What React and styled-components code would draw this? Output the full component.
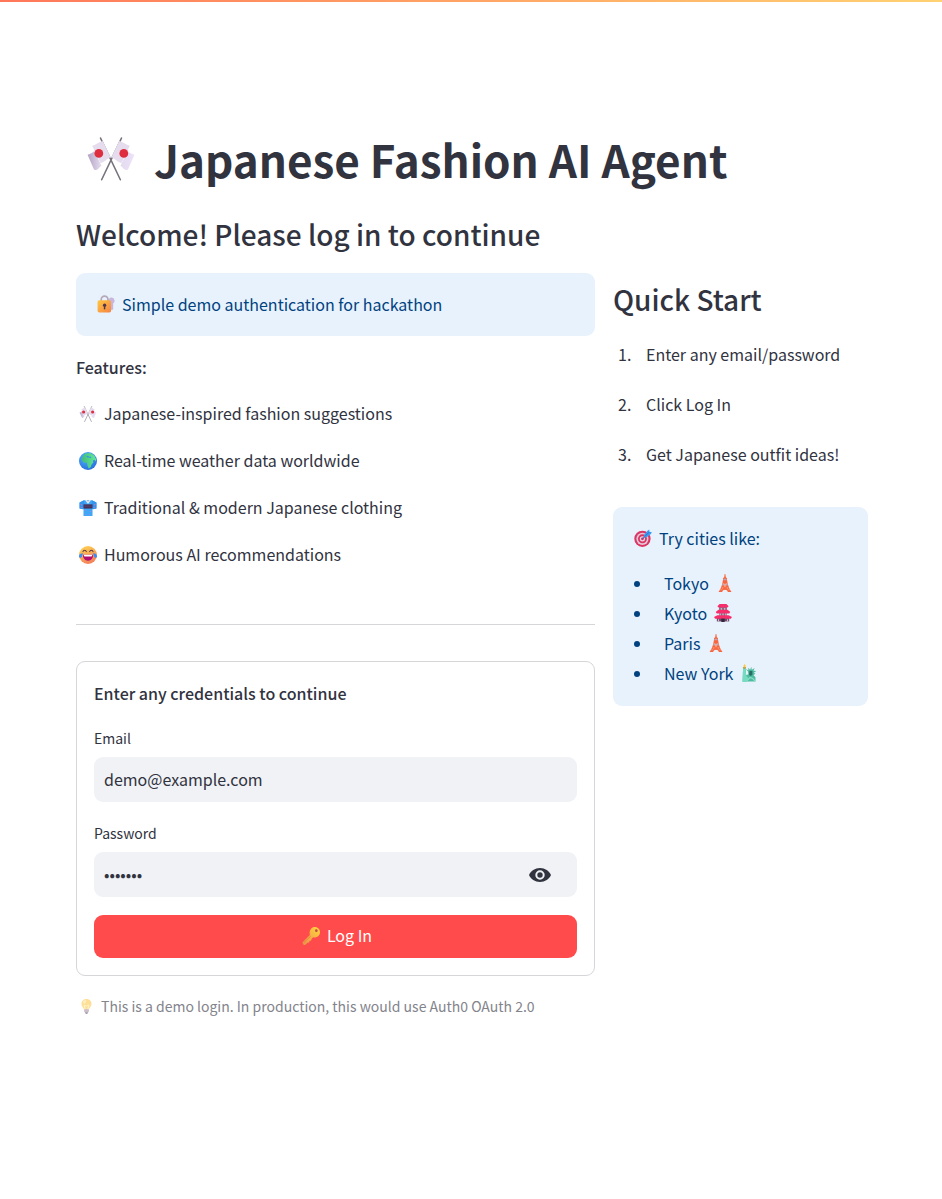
import React, { useState } from "react";
import styled, { createGlobalStyle } from "styled-components";

const GlobalStyle = createGlobalStyle`
  *, *::before, *::after { box-sizing: border-box; }
  body {
    margin: 0;
    background: #ffffff;
    color: #31333f;
    font-family: "Noto Sans CJK JP", "Noto Sans", sans-serif;
    font-size: 16px;
    line-height: 29px;
  }
  button, input { font: inherit; color: inherit; }
`;

const Decoration = styled.header`
  height: 2px;
  background: linear-gradient(90deg, #ff7759, #ffd272);
`;

const Page = styled.main`
  max-width: 942px;
  margin: 0 auto;
  padding: 127px 74px 96px 76px;
`;

const Title = styled.h1`
  display: flex;
  align-items: center;
  gap: 18px;
  margin: 0 0 26px;
  padding-left: 10px;
  font-size: 44px;
  font-weight: 700;
  line-height: 60px;
`;

const Heading = styled.h2`
  margin: 0;
  padding-bottom: ${(p) => (p.$padded ? "22px" : "20px")};
  font-size: 28px;
  font-weight: 500;
  line-height: 38px;
`;

const Columns = styled.div`
  display: flex;
  align-items: flex-start;
  flex-wrap: wrap;
  gap: 18px;
`;

const MainColumn = styled.section`
  flex: 1 1 calc(100% * 2 / 3 - 18px);
  min-width: 0;
`;

const SideColumn = styled.aside`
  flex: 1 1 calc(100% / 3 - 18px);
  min-width: 0;
  padding-top: 7px;
`;

const Notice = styled.div`
  padding: 17px 18px 18px;
  border-radius: 9px;
  background: #e8f2fc;
  color: #004280;
`;

const Line = styled.p`
  display: flex;
  align-items: center;
  gap: 4px;
  margin: 0;
  line-height: ${(p) => (p.$tight ? "28px" : "29px")};
`;

const Features = styled.div`
  display: flex;
  flex-direction: column;
  gap: 18px;
  padding-top: 17px;
`;

const Strong = styled.strong`
  font-weight: 500;
`;

const Divider = styled.hr`
  height: 1px;
  margin: 55px 0 36px;
  border: 0;
  background: #d6d6d9;
`;

const Form = styled.form`
  display: flex;
  flex-direction: column;
  gap: 18px;
  padding: 17px;
  border: 1px solid #d6d6d9;
  border-radius: 9px;
`;

const Field = styled.div`
  display: flex;
  flex-direction: column;
`;

const Label = styled.label`
  padding-bottom: 6px;
  font-size: 14px;
  line-height: 26px;
`;

const InputShell = styled.div`
  display: flex;
  align-items: center;
  height: 45px;
  border-radius: 9px;
  background: #f0f2f6;
`;

const Input = styled.input`
  flex: 1;
  min-width: 0;
  height: 45px;
  padding: 0 10px 2px;
  border: 0;
  outline: 0;
  background: transparent;
`;

const RevealButton = styled.button`
  display: flex;
  align-items: center;
  margin-right: 25px;
  padding: 0;
  border: 0;
  background: transparent;
  cursor: pointer;
`;

const SubmitButton = styled.button`
  display: flex;
  align-items: center;
  justify-content: center;
  gap: 4px;
  height: 43px;
  padding: 0 12px 2px;
  border: 0;
  border-radius: 9px;
  background: #ff4b4b;
  color: #ffffff;
  cursor: pointer;
`;

const Caption = styled.p`
  display: flex;
  align-items: center;
  gap: 4px;
  margin: 17px 0 0;
  color: #83848c;
  font-size: 14px;
  line-height: 26px;
`;

const Steps = styled.ol`
  display: flex;
  flex-direction: column;
  gap: 21px;
  margin: 0 0 38px;
  padding: 0 0 0 22px;
`;

const Step = styled.li`
  padding-left: 11px;
`;

const Cities = styled.ul`
  margin: 16px 0 0;
  padding: 0 0 0 22px;
  line-height: 30px;
`;

const City = styled.li`
  padding-left: 11px;
`;

const CityLine = styled.span`
  display: inline-flex;
  align-items: center;
  gap: 4px;
  vertical-align: top;
`;

const Glyph = styled.svg`
  flex: none;
  width: ${(p) => p.$size}px;
  height: ${(p) => p.$size}px;
  margin: 0 ${(p) => (p.$size > 20 ? 0 : 3)}px;
  opacity: ${(p) => (p.$faded ? 0.6 : 1)};
`;

const art = {
  flags: (
    <>
      <defs>
        <linearGradient id="flagL" x1="0" x2="1">
          <stop offset="0" stopColor="#b3a3c4" />
          <stop offset="1" stopColor="#e6def0" />
        </linearGradient>
        <linearGradient id="flagR" x1="0" x2="1">
          <stop offset="0" stopColor="#e3daee" />
          <stop offset="1" stopColor="#ece3fb" />
        </linearGradient>
      </defs>
      <path d="M9.3 2.6 22 29.3M22.700 2.600 10 29.300" stroke="#77727c" strokeWidth="1" strokeLinecap="round" />
      <path d="M1 13.200c2-.3 3-1.300 4.300-2.100L10 20.500c-1.300.2-1.700 2-3.400 2.500-.8.2-1.400 0-1.700-.7Z" fill="url(#flagL)" />
      <path d="M31 13.200c-2-.3-3-1.300-4.300-2.100L22 20.500c1.300.2 1.700 2 3.400 2.500.8.2 1.400 0 1.700-.7Z" fill="url(#flagR)" />
      <path d="M4 7.500C6.500 7 8.300 4.800 10.800 4.400L15.800 15c-2.200.4-3.400 2.800-6.600 3.500Z" fill="#e5dced" />
      <path d="M28 7.500C25.500 7 23.700 4.800 21.200 4.400L16.200 15c2.200.4 3.400 2.800 6.600 3.500Z" fill="#e5dced" />
      <circle cx="8.200" cy="12.400" r="2.800" fill="#df2d40" />
      <circle cx="24.200" cy="12.400" r="2.800" fill="#df2d40" />
    </>
  ),
  lock: (
    <>
      <defs>
        <linearGradient id="lockBody" x1="0" y1="0" x2="1" y2="1">
          <stop offset="0" stopColor="#ffc83f" />
          <stop offset="1" stopColor="#f58346" />
        </linearGradient>
      </defs>
      <path d="M21 10a5 5 0 0 1 10-1c.8 2.800-.2 5-2.200 6v10l-2 2-3-2Z" fill="#c9b6dc" />
      <path d="M7.500 12V8a6 6 0 0 1 12 0v4" fill="none" stroke="#b5a8b8" strokeWidth="3" />
      <rect x="1" y="9.500" width="24" height="21.500" rx="3" fill="url(#lockBody)" />
      <circle cx="13.500" cy="18" r="3" fill="#52384c" />
      <path d="M12.200 18h2.600v7.500h-2.600Z" fill="#52384c" />
    </>
  ),
  globe: (
    <>
      <defs>
        <radialGradient id="sea" cx=".4" cy=".3" r=".8">
          <stop offset="0" stopColor="#4fb8ff" />
          <stop offset="1" stopColor="#2467d8" />
        </radialGradient>
        <linearGradient id="land" x1="0" x2="1">
          <stop offset="0" stopColor="#41b978" />
          <stop offset="1" stopColor="#63ea99" />
        </linearGradient>
      </defs>
      <circle cx="16" cy="16" r="16" fill="url(#sea)" />
      <path d="M9 4.500 13 2l8 .3 6 4 3.500 7-1 3.500-2-3-3 1.500 1 3-3.500 4.500-1 4-4 2.500-2-5.500-1-5-5.500.2L4 13l3-5Z" fill="url(#land)" />
      <path d="m13 7.500 3-1 2 2h3l1 2-3-.3-5-1Z" fill="#3797e5" />
    </>
  ),
  kimono: (
    <>
      <path d="M9 2h14l8 4v11l-7 1v12H8V18l-7-1V6Z" fill="#3da7f8" />
      <path d="M1 6 9 2l1 10-3 6-6-1ZM31 6l-8-4-1 10 3 6 6-1Z" fill="#3494ec" />
      <path d="m11 2 5 7 5-7-2.500-.5L16 5l-2.500-3.500Z" fill="#f0e9f5" />
      <path d="M8 9.500h16V17H8Z" fill="#443057" />
      <path d="M8 12h16v1.500H8Z" fill="#5c4470" />
      <g fill="#de74c3">
        <circle cx="4" cy="10" r="1" />
        <circle cx="28" cy="10" r="1" />
        <circle cx="5" cy="15" r="1" />
        <circle cx="27" cy="15" r="1" />
        <circle cx="12" cy="20" r="1" />
        <circle cx="20" cy="22" r="1" />
        <circle cx="12" cy="27" r="1" />
        <circle cx="19" cy="28" r="1" />
      </g>
    </>
  ),
  joy: (
    <>
      <defs>
        <linearGradient id="face" x1="0" y1="0" x2=".4" y2="1">
          <stop offset="0" stopColor="#ffd84d" />
          <stop offset="1" stopColor="#f4845a" />
        </linearGradient>
      </defs>
      <circle cx="16" cy="16" r="16" fill="url(#face)" />
      <path d="M7 10c1-3 5-3 6 0M19 10c1-3 5-3 6 0" fill="none" stroke="#54334c" strokeWidth="1.800" strokeLinecap="round" />
      <path d="M7 15.500h18C25 22 21.500 26 16 26S7 22 7 15.500Z" fill="#b20c70" />
      <path d="M8 15.500h16l-1.500 3h-13Z" fill="#fff" />
      <path d="M7 13c-4 0-7 2-7 5.500C0 21 3.500 22 5 19.500ZM25 13c4 0 7 2 7 5.500 0 2.500-3.500 3.500-5 1Z" fill="#398cf3" />
    </>
  ),
  target: (
    <>
      <circle cx="15" cy="17.500" r="14.500" fill="#db3564" />
      <circle cx="15" cy="17.500" r="10.800" fill="#e5c8da" />
      <circle cx="15" cy="17.500" r="8" fill="#d93664" />
      <circle cx="15" cy="17.500" r="4.700" fill="#ead7e5" />
      <circle cx="15" cy="17.500" r="2.500" fill="#d33361" />
      <path d="m15.500 17 11-11" stroke="#2876cd" strokeWidth="2" />
      <path d="m18 10 6-7 3-2 .5 4 4.300.6L30 9l-7 5-5 .5Z" fill="#3f9bf1" />
      <path d="m19 13.500 8-8" stroke="#226ec5" strokeWidth="1.500" />
    </>
  ),
  tower: (
    <>
      <path d="M15.400 0h1.200l1 6 2 1v3l1.400 8 3 8 3.500 6H21c-.5-5.500-9.500-5.500-10 0H4.500L8 26l3-8 1.400-8V7l2-1Z" fill="#f8663f" />
      <path d="M13 8.500h6v2.500h-6ZM11.600 17.500h8.800l.6 3H11Z" fill="#c6a2ad" />
      <path d="m13 16 5 8m1-8-5 8m-3.500-1 2 4m9-4-2 4M7.500 28h3.500m10 0h3.500" stroke="#ffc3a6" strokeWidth=".9" />
    </>
  ),
  pagoda: (
    <>
      <path d="M9 5h14v24H9Z" fill="#8c6b84" />
      <path d="M5 23h22v8H5Z" fill="#6a4c69" />
      <path d="M10 0h12l4 4-2 2H8L6 4ZM8 10h16l5 4-2 3H5l-2-3ZM6 20h20l6 3-2 3H2l-2-3Z" fill="#f62e6b" />
      <path d="M12 7h2v3h-2Zm6 0h2v3h-2ZM10 17h2v3h-2Zm5 0h2v3h-2Zm5 0h2v3h-2ZM7 27h2v4H7Zm16 0h2v4h-2Z" fill="#dbbad1" />
      <path d="M13 26h6v6h-6Z" fill="#352742" />
    </>
  ),
  liberty: (
    <>
      <path d="M5.500 7h4.500l1 13 4-2-1-5-4-4 5 2-.5-4.500 3.500 3.500 2-5 1 5 5-3-2 5 5 .5-4.500 3 3 2-3.500 2 3.500 4v7.500H4.500Z" fill="#4fbc9f" />
      <path d="M5.500 7H10l1 14 4 4-4 7H4.500Z" fill="#74dcc0" />
      <path d="m17 12 5 .5v7l-4 2-2-3Z" fill="#276e65" />
      <path d="m12 30 6-6 5 2 4 5" fill="none" stroke="#8be0c9" strokeWidth="2" />
      <path d="M5 5.500h6l-1.500 3h-3Z" fill="#bb9b45" />
      <path d="M8 0c3 3 3 5 0 6-3-1-2-3 0-6Z" fill="#ffc83b" />
    </>
  ),
  key: (
    <>
      <defs>
        <linearGradient id="keyGold" x1="1" y1="0" x2="0" y2="1">
          <stop offset="0" stopColor="#ffd53d" />
          <stop offset="1" stopColor="#eb914b" />
        </linearGradient>
      </defs>
      <path d="M22.500 0A9 9 0 0 1 32 9.500C32 15 27 20 20 18l-3 3-.5 3-3 .5-1 3-3 .5-3.500 3.500c-2 1.500-5-.5-5-3.500v-1l13-13C12 7 16.500 0 22.500 0Z" fill="url(#keyGold)" />
      <circle cx="25.500" cy="6.500" r="2.300" fill="#c34745" />
      <path d="M3 28 16 15.500" stroke="#d9793b" strokeWidth="1.200" />
    </>
  ),
  bulb: (
    <>
      <path d="M16 0C8.500 0 4.500 5.500 5.500 12c.8 4 4.500 6.500 5.500 11h10c1-4.500 4.700-7 5.500-11C27.500 5.500 23.500 0 16 0Z" fill="#ffca55" />
      <path d="M13 22 11 13l5 2 5-2-2 9" fill="none" stroke="#fff0a2" strokeWidth="2" />
      <ellipse cx="12" cy="6" rx="3" ry="4" fill="#ffe595" transform="rotate(35 12 6)" />
      <path d="M11 22h10v5l-2 2h-6l-2-2Z" fill="#a894ad" />
      <path d="M13 28h6v2l-2 2h-2l-2-2Z" fill="#67556d" />
    </>
  ),
};

function Emoji({ name, label, size = 18, faded = false }) {
  return (
    <Glyph viewBox="0 0 32 32" role="img" aria-label={label} fill="none" $size={size} $faded={faded}>
      {art[name]}
    </Glyph>
  );
}

const features = [
  ["flags", "Crossed flags", "Japanese-inspired fashion suggestions"],
  ["globe", "Globe", "Real-time weather data worldwide"],
  ["kimono", "Kimono", "Traditional & modern Japanese clothing"],
  ["joy", "Tears of joy", "Humorous AI recommendations"],
];

const cities = [
  ["Tokyo", "tower", "Tokyo tower"],
  ["Kyoto", "pagoda", "Castle"],
  ["Paris", "tower", "Tower"],
  ["New York", "liberty", "Statue of Liberty"],
];

export default function App() {
  const [email, setEmail] = useState("demo@example.com");
  const [password, setPassword] = useState("demo123");
  const [revealed, setRevealed] = useState(false);

  return (
    <>
      <GlobalStyle />
      <Decoration />
      <Page>
        <Title>
          <Emoji name="flags" label="Crossed flags" size={50} />
          <span>Japanese Fashion AI Agent</span>
        </Title>
        <Heading>Welcome! Please log in to continue</Heading>
        <Columns>
          <MainColumn>
            <Notice>
              <Line $tight>
                <Emoji name="lock" label="Locked with key" />
                Simple demo authentication for hackathon
              </Line>
            </Notice>
            <Features>
              <Line $tight>
                <Strong>Features:</Strong>
              </Line>
              {features.map(([icon, label, text]) => (
                <Line key={text}>
                  <Emoji name={icon} label={label} />
                  {text}
                </Line>
              ))}
            </Features>
            <Divider />
            <Form onSubmit={(e) => e.preventDefault()}>
              <Line $tight>
                <Strong>Enter any credentials to continue</Strong>
              </Line>
              <Field>
                <Label htmlFor="email">Email</Label>
                <InputShell>
                  <Input id="email" type="text" value={email} onChange={(e) => setEmail(e.target.value)} />
                </InputShell>
              </Field>
              <Field>
                <Label htmlFor="password">Password</Label>
                <InputShell>
                  <Input
                    id="password"
                    type={revealed ? "text" : "password"}
                    value={password}
                    onChange={(e) => setPassword(e.target.value)}
                  />
                  <RevealButton type="button" aria-label="Show password text" onClick={() => setRevealed(!revealed)}>
                    <svg width="24" height="24" viewBox="0 0 24 24" fill="#31333f" aria-hidden="true">
                      <path d="M12 5C7 5 2.730 8 1 12c1.730 4 6 7 11 7s9.270-3 11-7c-1.730-4-6-7-11-7Zm0 11.700a4.700 4.700 0 1 1 0-9.400 4.700 4.700 0 0 1 0 9.400ZM12 9.300a2.700 2.700 0 1 0 0 5.400 2.700 2.700 0 0 0 0-5.400Z" />
                    </svg>
                  </RevealButton>
                </InputShell>
              </Field>
              <SubmitButton type="submit">
                <Emoji name="key" label="Key" />
                Log In
              </SubmitButton>
            </Form>
            <Caption>
              <Emoji name="bulb" label="Light bulb" size={15} faded />
              This is a demo login. In production, this would use Auth0 OAuth 2.0
            </Caption>
          </MainColumn>
          <SideColumn>
            <Heading $padded>Quick Start</Heading>
            <Steps>
              <Step>Enter any email/password</Step>
              <Step>Click Log In</Step>
              <Step>Get Japanese outfit ideas!</Step>
            </Steps>
            <Notice>
              <Line $tight>
                <Emoji name="target" label="Direct hit" />
                Try cities like:
              </Line>
              <Cities>
                {cities.map(([city, icon, label]) => (
                  <City key={city}>
                    <CityLine>
                      {city}
                      <Emoji name={icon} label={label} />
                    </CityLine>
                  </City>
                ))}
              </Cities>
            </Notice>
          </SideColumn>
        </Columns>
      </Page>
    </>
  );
}
